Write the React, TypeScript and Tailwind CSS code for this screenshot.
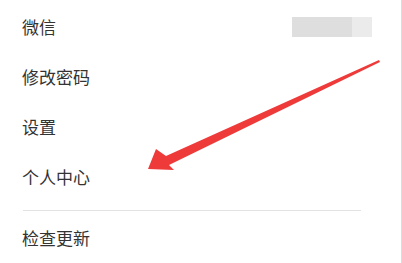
import React from 'react';

const items = ['微信', '修改密码', '设置', '个人中心'];

const App: React.FC = () => {
  return (
    <div
      className="relative w-[402px] h-[263px] overflow-hidden bg-white border-r border-[#dcdcdc]"
      style={{ fontFamily: '"Microsoft YaHei", "Noto Sans CJK SC", "Noto Sans", sans-serif' }}
    >
      <div className="pt-[2px]">
        {items.map((label, i) => (
          <div key={label} className="h-[50px] flex items-center pl-[22px] pr-[28px] text-[17px] text-[#333333]">
            <span className="flex-1">{label}</span>
            {i === 0 && (
              <div className="flex h-[20px] mr-[1px]">
                <div className="w-[60px] bg-[#dedede]" />
                <div className="w-[20px] bg-[#ebebeb]" />
              </div>
            )}
          </div>
        ))}
      </div>
      <div className="mt-[8px] ml-[23px] w-[338px] h-px bg-[#e2e2e2]" />
      <div className="h-[54px] flex items-center pl-[22px] text-[17px] text-[#333333]">检查更新</div>

      <svg className="absolute left-0 top-0 pointer-events-none" width="402" height="263" viewBox="0 0 402 263">
        <polygon
          points="379,60 166,156 156,149 148,169 174,170 169,165 380,62"
          fill="#ef3a3a"
        />
      </svg>
    </div>
  );
};

export default App;
